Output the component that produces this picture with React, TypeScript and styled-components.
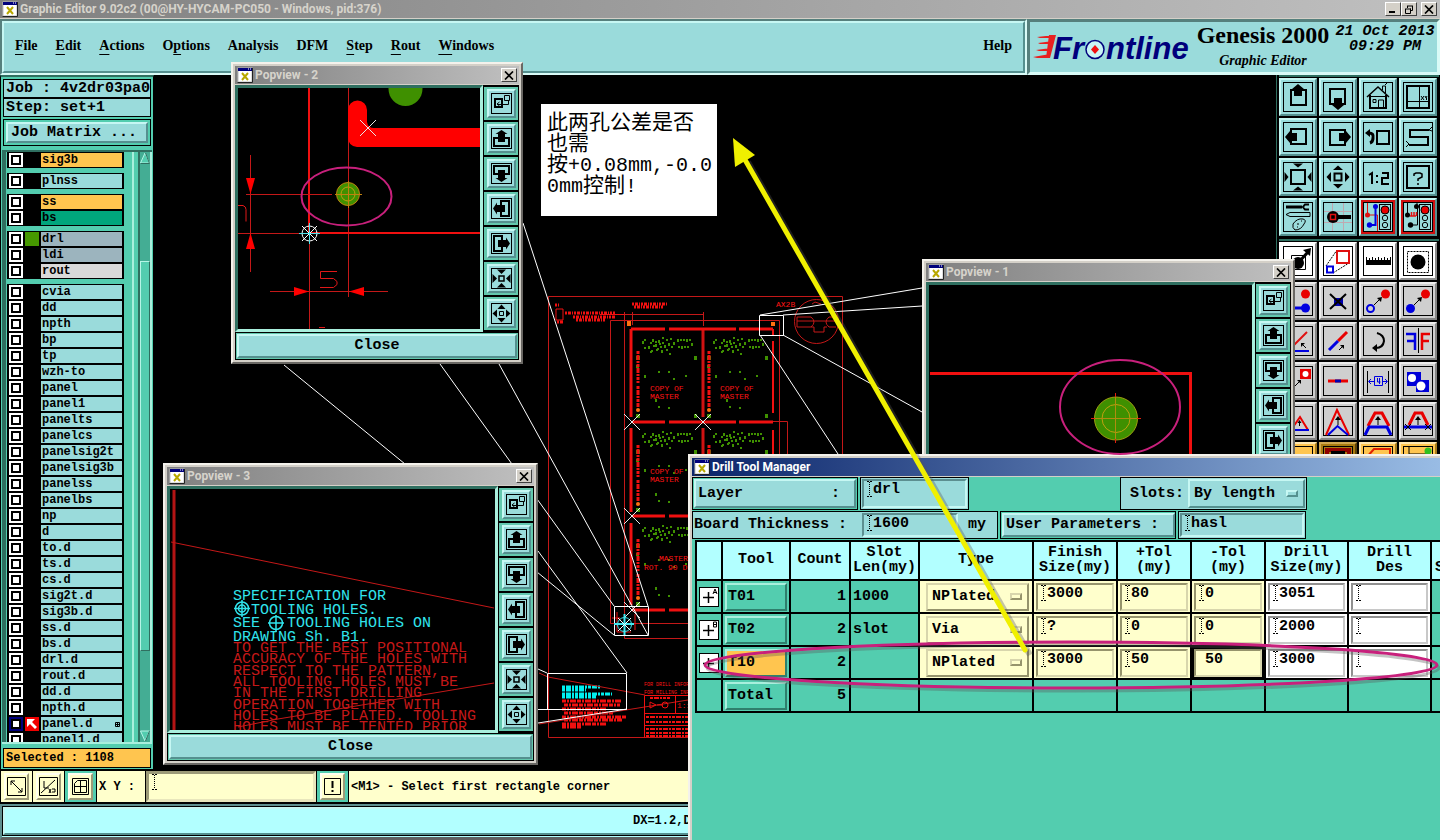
import React from 'react';
import styled, { createGlobalStyle, css } from 'styled-components';

const teal = '#9adbdb';
const green = '#53cdaf';
const cyan = '#b2ffff';
const cream = '#ffffcc';
const orange = '#ffc54f';
const mono = '"Liberation Mono", "Courier New", monospace';
const serif = '"Liberation Serif", "Times New Roman", serif';
const sans = '"Roboto", "Liberation Sans", sans-serif';

const Global = createGlobalStyle`
  * { box-sizing: border-box; }
  body { margin: 0; background: #000; overflow: hidden; }
  button, input, select { font: inherit; color: inherit; margin: 0; padding: 0; border: 0; border-radius: 0; background: none; outline: none; }
`;

const raised = css`
  border: 2px solid;
  border-color: #c6f7f3 #55908f #55908f #c6f7f3;
`;
const sunken = css`
  border: 2px solid;
  border-color: #5c8f90 #c6f7f3 #c6f7f3 #5c8f90;
`;

/* ---------- page shell ---------- */

const Screen = styled.div`
  position: relative;
  display: flex;
  flex-direction: column;
  height: 100vh;
  min-height: 840px;
  overflow: hidden;
  background: #000;
  color: #000;
  font: bold 15px/18px ${mono};
`;

const MainTitle = styled.header`
  display: flex;
  align-items: center;
  height: 19px;
  padding: 0 3px 0 2px;
  gap: 2px;
  border-bottom: 1px solid #d4d0c8;
  background: linear-gradient(90deg, #808080, #c0c0c0);
  color: #d6d3cb;
  font: bold 12px/16px ${sans};
`;
const TitleText = styled.span`
  flex: 1;
  white-space: nowrap;
`;
const CaptionButton = styled.button<{ $gap?: boolean }>`
  display: flex;
  align-items: center;
  justify-content: center;
  width: 16px;
  height: 14px;
  margin-left: ${(p) => (p.$gap ? 2 : -2)}px;
  background: #d4d0c8;
  color: #000;
  border: 1px solid;
  border-color: #fff #404040 #404040 #fff;
`;

const HeaderRow = styled.div`
  display: flex;
  height: 56px;
`;
const MenuFrame = styled.nav`
  flex: 1;
  display: flex;
  border: 2px solid;
  border-color: #56807d #d9fbf7 #d9fbf7 #56807d;
`;
const MenuPanel = styled.div`
  flex: 1;
  display: flex;
  align-items: center;
  gap: 18px;
  padding: 0 11px 2px 11px;
  background: ${teal};
  font: bold 14px/20px ${serif};
  ${raised}
`;
const MenuItem = styled.button`
  white-space: nowrap;
  u { text-underline-offset: 4px; }
  &:last-child { margin-left: auto; }
`;
const Brand = styled.div`
  display: flex;
  width: 413px;
  padding-left: 4px;
  background: ${teal};
  border: 3px solid;
  border-color: #56807d #d9fbf7 #d9fbf7 #56807d;
`;
const BrandName = styled.div`
  width: 140px;
  text-align: center;
  white-space: nowrap;
`;
const Product = styled.div`
  font: bold 24px/26px ${serif};
`;
const Edition = styled.div`
  font: italic bold 14px/26px ${serif};
`;
const Clock = styled.div`
  flex: 1;
  padding-top: 2px;
  text-align: center;
  white-space: nowrap;
  font: italic bold 15px/15px ${mono};
`;

const Body = styled.div`
  display: flex;
  flex: 1;
  min-height: 0;
`;
const Viewport = styled.main`
  flex: 1;
  min-width: 0;
  overflow: hidden;
  svg { display: block; width: 100%; height: 100%; }
`;

/* ---------- left panel ---------- */

const Side = styled.aside`
  display: flex;
  flex-direction: column;
  width: 154px;
  padding: 2px 1px 1px 1px;
  background: ${green};
  border: 1px solid #000;
  border-top: 2px solid #2f6f60;
`;
const InfoBox = styled.div`
  margin: 0 1px;
  border: 1px solid #000;
  background: #000;
  display: grid;
  gap: 2px;
`;
const InfoLine = styled.div`
  padding-left: 2px;
  background: ${teal};
  line-height: 17px;
  white-space: nowrap;
`;
const MatrixBox = styled.div`
  display: flex;
  margin: 2px 1px 4px;
  padding: 2px;
  border: 1px solid #000;
`;
const MatrixButton = styled.button`
  flex: 1;
  height: 21px;
  line-height: 17px;
  padding-left: 3px;
  text-align: left;
  background: ${teal};
  ${raised}
`;
const ListArea = styled.div`
  display: flex;
  flex: 1;
  min-height: 0;
  border-top: 2px solid #2f6f60;
  border-bottom: 2px solid #a9efdd;
`;
const LayerScroll = styled.div`
  flex: 1;
  display: flex;
  flex-direction: column;
  gap: 5px;
  overflow: hidden;
  padding-right: 8px;
  border-left: 4px solid #2f6f60;
  border-right: 2px solid #a9efdd;
`;
const LayerGroup = styled.div`
  flex: none;
  display: grid;
  gap: 2px;
  margin-left: 1px;
  padding: 1px 2px 1px 2px;
  background: #000;
`;
const LayerLine = styled.label`
  display: grid;
  grid-template: 14px / 14px 14px 1fr;
  gap: 2px;
  height: 14px;
  font: bold 12px/14px ${mono};
  svg { display: block; }
`;
const LayerCheck = styled.input<{ $active?: boolean }>`
  appearance: none;
  width: 14px;
  height: 14px;
  border: 2px solid ${(p) => (p.$active ? '#00007c' : '#fff')};
  background: #fff;
  box-shadow: inset 0 0 0 2px #000;
`;
const LayerColour = styled.span<{ $fill: string }>`
  display: block;
  background: ${(p) => p.$fill};
`;
const LayerName = styled.span<{ $fill: string }>`
  display: flex;
  align-items: center;
  justify-content: space-between;
  padding: 0 2px 0 1px;
  background: ${(p) => p.$fill};
  overflow: hidden;
`;
const ScrollTrack = styled.div`
  display: flex;
  flex-direction: column;
  width: 14px;
  margin-left: 4px;
  background: #44ad94;
  border-left: 2px solid #2f6f60;
  border-right: 2px solid #a9efdd;
`;
const Thumb = styled.div`
  flex: 391 1 0;
  background: ${green};
  border: 1px solid;
  border-color: #b5f5e6 #2f6f60 #2f6f60 #b5f5e6;
`;
const TrackGap = styled.div<{ $share: number }>`
  flex: ${(p) => p.$share} 1 0;
`;
const Selected = styled.div`
  margin: 4px 1px 0;
  padding-left: 2px;
  border: 1px solid #000;
  background: ${orange};
  font: bold 12px/18px ${mono};
`;

/* ---------- tool palette ---------- */

const Palette = styled.aside`
  width: 164px;
  padding: 0 1px 0 2px;
  border-left: 1px solid #2f6f60;
  background: #000;
`;
const TileGrid = styled.div`
  display: grid;
  grid-template-columns: repeat(4, 38px);
  gap: 2px;
  padding: 1px 0 3px;
  border-top: 2px solid #2f6f60;
`;
type Tone = 'teal' | 'white' | 'grey' | 'alarm' | 'amber' | 'umber';
const toneFill: Record<Tone, string> = {
  teal, white: '#fff', grey: '#cfcfcf', alarm: teal, amber: orange, umber: '#a87a10',
};
const toneEdge: Record<Tone, string> = {
  teal: '#c6f7f3 #55908f #55908f #c6f7f3',
  white: '#fff #8c8c8c #8c8c8c #fff',
  grey: '#ececec #858585 #858585 #ececec',
  alarm: '#c6f7f3 #55908f #55908f #c6f7f3',
  amber: '#ffe7b0 #a67c20 #a67c20 #ffe7b0',
  umber: '#d0a850 #5c420a #5c420a #d0a850',
};
const Tile = styled.button<{ $tone: Tone }>`
  display: grid;
  place-items: center;
  width: 38px;
  height: 38px;
  background: ${(p) => toneFill[p.$tone]};
  border: 2px solid;
  border-color: ${(p) => toneEdge[p.$tone]};
  box-shadow: ${(p) => (p.$tone === 'alarm' ? 'inset 0 0 0 2px #d01010' : 'none')};
  svg { display: block; }
`;

/* ---------- bottom bars ---------- */

const CommandBar = styled.div`
  display: flex;
  gap: 1px;
  height: 34px;
  padding: 1px 0 0 1px;
  background: #000;
  font: bold 12px/32px ${mono};
`;
const CommandCell = styled.div<{ $green?: boolean }>`
  display: grid;
  place-items: center;
  width: 31px;
  height: 31px;
  background: ${(p) => (p.$green ? green : cream)};
`;
const CommandButton = styled.button`
  display: grid;
  place-items: center;
  width: 25px;
  height: 27px;
  background: ${cream};
  border: 2px solid;
  border-color: #fffff0 #9c9a78 #9c9a78 #fffff0;
`;
const XYLabel = styled.label`
  width: 48px;
  height: 31px;
  padding-left: 2px;
  background: ${cream};
`;
const XYField = styled.div`
  display: flex;
  width: 170px;
  height: 31px;
  padding: 0 3px;
  background: ${cream};
  border: 3px solid;
  border-color: #9c9a78 #e8e6bc #e8e6bc #9c9a78;
  input { flex: 1; min-width: 0; }
`;
const Prompt = styled.div`
  flex: 1;
  height: 31px;
  padding-left: 2px;
  background: ${cream};
`;
const StatusFrame = styled.footer`
  height: 36px;
  padding: 1px 1px 1px 1px;
  background: ${cyan};
  border: 2px solid;
  border-color: #5f8f8f #5f8f8f #606060 #5f8f8f;
  border-bottom-width: 3px;
`;
const StatusBar = styled.div`
  height: 28px;
  padding-left: 628px;
  background: ${cyan};
  outline: 1px solid #000;
  font: bold 12px/24px ${mono};
  ${raised}
`;

/* ---------- floating windows ---------- */

const WindowFrame = styled.section<{ $x: number; $y: number; $w: number; $h: number }>`
  position: absolute;
  left: ${(p) => p.$x}px;
  top: ${(p) => p.$y}px;
  width: ${(p) => p.$w}px;
  height: ${(p) => p.$h}px;
  display: flex;
  flex-direction: column;
  padding: 2px;
  background: #d4d0c8;
  border: 2px solid;
  border-color: #f4f2ec #6a6864 #6a6864 #f4f2ec;
`;
const WindowTitle = styled.div<{ $active?: boolean }>`
  display: flex;
  align-items: center;
  gap: 2px;
  height: 18px;
  flex: none;
  padding: 0 2px;
  margin-bottom: 1px;
  background: ${(p) => (p.$active ? 'linear-gradient(90deg, #0a246a, #a6caf0)' : 'linear-gradient(90deg, #808080, #c0c0c0)')};
  color: ${(p) => (p.$active ? '#fff' : '#d6d3cb')};
  font: bold 12px/16px ${sans};
`;
const PopBody = styled.div`
  display: flex;
  flex: 1;
  min-height: 0;
  background: #000;
`;
const PopCanvas = styled.div`
  flex: 1;
  min-width: 0;
  border: 3px solid;
  border-color: #2f6f60 #a9efdd #a9efdd #2f6f60;
  background: #000;
  svg { display: block; width: 100%; height: 100%; }
`;
const PopTools = styled.div`
  display: flex;
  flex-direction: column;
  gap: 2px;
  width: 36px;
  padding: 2px 1px 0;
`;
const PopCell = styled.div`
  flex: none;
  display: grid;
  place-items: center;
  width: 34px;
  height: 33px;
  background: #63c8ae;
`;
const PopButton = styled.button`
  display: grid;
  place-items: center;
  width: 29px;
  height: 29px;
  background: ${teal};
  ${raised}
  svg { display: block; }
`;
const CloseBar = styled.div`
  display: flex;
  height: 28px;
  padding: 1px;
  background: #63c8ae;
  border: 1px solid #000;
`;
const CloseButton = styled.button`
  flex: 1;
  background: ${teal};
  line-height: 20px;
  ${raised}
`;

/* ---------- drill tool manager ---------- */

const DrillBody = styled.div`
  flex: 1;
  background: ${green};
`;
const FormRow = styled.div<{ $h: number }>`
  display: flex;
  gap: 2px;
  height: ${(p) => p.$h}px;
  margin-bottom: 1px;
`;
const FormCell = styled.div<{ $w: number; $fill?: string; $pull?: boolean }>`
  display: flex;
  align-items: center;
  width: ${(p) => p.$w}px;
  margin-left: ${(p) => (p.$pull ? '149px' : '0')};
  padding: ${(p) => (p.$pull ? '1px 1px 1px 9px' : '1px')};
  background: ${(p) => p.$fill || teal};
  border: 1px solid #000;
  white-space: nowrap;
`;
const FormButton = styled.button`
  flex: 1;
  display: flex;
  align-items: center;
  height: 100%;
  padding: 0 14px 0 2px;
  justify-content: space-between;
  background: ${teal};
  ${raised}
`;
const Field = styled.div<{ $tone?: 'cream' | 'white' }>`
  display: flex;
  flex: 1;
  min-width: 0;
  height: 100%;
  padding: 0 2px 0 3px;
  ${sunken}
  ${(p) => p.$tone && css`
    height: 28px;
    margin: 1px 2px;
    background: ${p.$tone === 'cream' ? cream : '#fff'};
    border-color: ${p.$tone === 'cream' ? '#96946c #d8d6ac #d8d6ac #96946c' : '#909090 #c8c8c8 #c8c8c8 #909090'};
  `}
  input { width: 100%; min-width: 0; height: 18px; line-height: 18px; }
`;
const FormLabel = styled.label`
  padding: 0 4px 0 0;
`;
const ThicknessLabel = styled(FormLabel)`
  padding-right: 15px;
`;
const Unit = styled.span`
  padding: 0 10px;
`;
const SelectBox = styled.div<{ $tone?: 'cream' }>`
  display: flex;
  align-items: center;
  flex: 1;
  height: ${(p) => (p.$tone ? '28px' : '100%')};
  margin: ${(p) => (p.$tone ? '1px 3px 1px 6px' : '0')};
  padding: 0 5px 0 4px;
  background: ${(p) => (p.$tone ? cream : teal)};
  ${raised}
  ${(p) => p.$tone && css`border-color: #d8d6ac #96946c #96946c #d8d6ac;`}
  select { appearance: none; flex: 1; min-width: 0; }
`;
const SelectKnob = styled.span<{ $tone?: 'cream' }>`
  width: 12px;
  height: 7px;
  border: 2px solid;
  border-color: ${(p) => (p.$tone ? '#d8d6ac #96946c #96946c #d8d6ac' : '#c6f7f3 #55908f #55908f #c6f7f3')};
`;
const ToolTable = styled.table`
  table-layout: fixed;
  width: 815px;
  margin: 0 0 0 3px;
  border-collapse: collapse;
  th, td { padding: 0; border: 2px solid #000; }
  th { height: 39px; padding-bottom: 2px; background: ${cyan}; font-weight: bold; line-height: 15px; white-space: pre-line; text-align: center; }
  td { height: 33px; background: ${green}; }
`;
const NumberCell = styled.td`
  && { text-align: right; padding-right: 3px; }
`;
const TextCell = styled.td`
  && { padding-left: 2px; }
`;
const FieldCell = styled.td<{ $tone: 'cream' | 'white'; $focus?: boolean }>`
  && {
    background: ${(p) => (p.$tone === 'cream' ? cream : '#fff')};
    box-shadow: ${(p) => (p.$focus ? 'inset 0 0 0 2px #000' : 'none')};
  }
`;
const ToolButton = styled.button<{ $hot?: boolean }>`
  display: block;
  width: 62px;
  height: 28px;
  margin: 0 auto;
  padding-left: 1px;
  text-align: left;
  background: ${(p) => (p.$hot ? orange : green)};
  border: 2px solid;
  border-color: #a9efdd #2f7f6c #2f7f6c #a9efdd;
`;
const MarkCell = styled.td`
  svg { display: block; margin: 0 auto; }
`;

/* ---------- annotations ---------- */

const Note = styled.div`
  position: absolute;
  left: 541px;
  top: 104px;
  width: 176px;
  height: 112px;
  padding: 6px 0 0 6px;
  background: #fff;
  white-space: nowrap;
  font: 20px/21px ${mono};
`;
const NoteLine = styled.div`
  height: 21px;
`;
const Han = styled.span`
  font: 21px/21px "Noto Sans CJK SC", sans-serif;
`;
const Markup = styled.svg`
  position: absolute;
  left: 0;
  top: 0;
  width: 100%;
  height: 100%;
  pointer-events: none;
`;

/* ---------- small drawings ---------- */

const AppIcon = () => (
  <svg width="16" height="16" viewBox="0 0 16 16" aria-hidden="true">
    <rect x="1" y="1" width="14" height="14" fill="#fff" stroke="#bbb" />
    <rect x="1" y="1" width="14" height="3" fill="#00007c" />
    <path d="M11 2h1M13 2h1" stroke="#fff" />
    <path d="M5 6l6 7M11 6l-6 7" stroke="#b8a800" strokeWidth="2" />
    <path d="M15.500 1v14.500h-15" stroke="#222" fill="none" />
  </svg>
);

const CloseGlyph = () => (
  <svg width="10" height="9" viewBox="0 0 10 9" aria-hidden="true">
    <path d="M1 0.500l8 8M9 0.500l-8 8" stroke="#000" strokeWidth="1.700" />
  </svg>
);

const BeamMark = styled.svg`
  flex: none;
`;
const Beam = () => (
  <BeamMark width="6" height="16" viewBox="0 0 6 16" aria-hidden="true">
    <path d="M2.500 1v14" stroke="#000" strokeDasharray="1 1" />
    <path d="M0 0.500h2M3 0.500h2M0 15.500h2M3 15.500h2" stroke="#000" />
  </BeamMark>
);

const arrowUp = 'M15 2l6 5h-2v7h-8v-7h-2z';
const boxArrow = (turn: number) => (
  <g transform={`rotate(${turn} 15 15)`}>
    <rect x="8" y="8" width="15" height="15" fill="none" stroke="#000" strokeWidth="2" />
    <path d={arrowUp} />
  </g>
);
const around = (d: string, c = 15) => [0, 90, 180, 270].map((a) => <path key={a} d={d} transform={`rotate(${a} ${c} ${c})`} />);
const line = (d: string, stroke = '#000', w = 1, dash?: string) => (
  <path d={d} fill="none" stroke={stroke} strokeWidth={w} strokeDasharray={dash} />
);
const light = (
  <>
    <rect x="16.500" y="2.500" width="11" height="25" fill={teal} stroke="#000" />
    <circle cx="22" cy="8" r="4" fill="#e80000" stroke="#000" />
    <circle cx="22" cy="16" r="2.700" fill="none" stroke="#000" />
    <circle cx="22" cy="23" r="2.700" fill="none" stroke="#000" />
  </>
);
const upTick = <>{line('M15 13v6')}<path d="M15 10l3 4h-6z" /></>;

type Tool = { name: string; tone: Tone; art: React.ReactNode };

const viewTools: Tool[] = [
  { name: 'Pan up', tone: 'teal', art: boxArrow(0) },
  { name: 'Pan down', tone: 'teal', art: boxArrow(180) },
  { name: 'Home', tone: 'teal', art: <>
    {line('M4 15L15 5L26 15', '#000', 1.5)}
    {line('M7 13v13h16v-13', '#000', 2)}
    {line('M7 14.500h16M15.500 26v-8h5v8M10 17.500h3v3h-3zM19.500 8v-4h3v7M22 3l2-2')}
  </> },
  { name: 'Coordinates', tone: 'teal', art: <>
    {line('M4 4h22v22h-22z', '#000', 2)}
    {line('M16.500 4v22M4 19.500h22M18 14l3 4M21 14l-3 4M22 14l1 2l1-2M23.500 16v2')}
  </> },
  { name: 'Pan left', tone: 'teal', art: boxArrow(270) },
  { name: 'Pan right', tone: 'teal', art: boxArrow(90) },
  { name: 'Previous view', tone: 'teal', art: <>
    {line('M14 9h12v13h-12z', '#000', 2)}
    {line('M6 11q5 0 4 5q0 4-3 5', '#000', 3)}
    <path d="M2 11l5-4v8z" />
  </> },
  { name: 'Serpentine', tone: 'teal', art: <>
    {line('M26 8H7v7h18v8H6', '#000', 2)}
    {line('M26 8l3-3M26 8l3 1M6 22l-3-3M6 22l-3 3')}
  </> },
  { name: 'Zoom in', tone: 'teal', art: <>
    {line('M8 8h14v14h-14z', '#000', 2)}
    {around('M10 1.500h10l-5 4z')}
  </> },
  { name: 'Zoom out', tone: 'teal', art: <>
    {line('M11.500 11.500h7v7h-7z', '#000', 2)}
    {around('M10 8h10l-5-4.500z')}
  </> },
  { name: 'Scale one to two', tone: 'teal', art: <>
    {line('M6 13l3-2v11M19 11h6v5h-6v6h7', '#000', 2)}
    <path d="M13 13h2v2h-2zM13 19h2v2h-2z" />
  </> },
  { name: 'Query', tone: 'teal', art: <>
    {line('M4 4h22v22h-22z', '#000', 2)}
    {line('M11 14v-2l2-1h4l2 1v3l-4 2v2M15 21v2', '#000', 1.5)}
  </> },
  { name: 'Setup', tone: 'teal', art: <>
    {line('M3 5h16', '#000', 3)}
    {line('M26 2.500h-4l-2 2.500l2 2.500h4', '#000', 2)}
    {line('M3 12.500l4-2h20v4h-20z')}
    {line('M10 22q4-6 10-5q4 1 1 5q-3 6-9 6q-3-2-2-6M14 22h2M18 19h1M14 25h1')}
  </> },
  { name: 'Pick feature', tone: 'teal', art: <>
    {line('M9.500 1v28M20.500 1v28M1 9.500h28M1 20.500h28', '#c0a8b0')}
    <circle cx="10" cy="15" r="6" />
    {line('M15 15h13', '#000', 4)}
    {line('M7.500 12.500h5v5h-5z', '#e01010', 1.5)}
  </> },
  { name: 'Net check', tone: 'alarm', art: <>
    {line('M4.500 1v12h10v16', '#e01010')}
    {line('M12.500 4v19h-6', '#0000e0', 2)}
    <circle cx="4.500" cy="13" r="2.500" fill="#e01010" />
    <circle cx="12.500" cy="4.500" r="2.500" fill="#0000e0" />
    <circle cx="6.500" cy="23" r="2.700" fill="#0000e0" />
    {light}
  </> },
  { name: 'Gap check', tone: 'alarm', art: <>
    {line('M4.500 1v12M14.500 4v19h-6M14 1v3')}
    {line('M7 14h6M8.500 10v4M11 10v4M13.500 10v4', '#e01010', 1.5)}
    <circle cx="4.500" cy="13" r="2.500" />
    <circle cx="13.500" cy="4.500" r="2.500" />
    <circle cx="7.500" cy="23" r="2.700" />
    {light}
  </> },
];

const editTools: Tool[] = [
  { name: 'Select point', tone: 'white', art: <>
    {line('M8.500 9.500h14v14h-14z')}<circle cx="15" cy="17" r="6" />
    {line('M15 17L25 6', '#000', 3)}<path d="M28 2l-1 8l-7-6z" />
  </> },
  { name: 'Transform', tone: 'white', art: <>
    {line('M3 20L14 4M10 27L26 17', '#000', 1, '2 1')}
    {line('M14 5h12v12h-12z', '#e01010', 2)}{line('M4 20.500h6v6h-6z', '#0000e0', 2)}
  </> },
  { name: 'Measure', tone: 'white', art: <>
    <path d="M3 14h25v5h-25z" />{line('M3.500 11v4M6.500 12v3M9.500 11v4M12.500 12v3M15.500 11v4M18.500 12v3M21.500 11v4M24.500 12v3M27.500 11v4')}
  </> },
  { name: 'Select area', tone: 'white', art: <>
    {line('M4.500 5.500h21v21h-21z', '#000', 1, '2 1')}<circle cx="15" cy="16" r="7.500" />
  </> },
  { name: 'Join', tone: 'grey', art: <>
    {line('M4 22h18', '#0000e0', 3)}<circle cx="22.500" cy="8" r="4.500" fill="#e80000" /><circle cx="22.500" cy="22" r="4.500" fill="#0000e0" />
  </> },
  { name: 'Delete', tone: 'grey', art: <>
    <path d="M11 12h9v8h-9z" fill="#0000b0" />{line('M7 8l16 15M23 8l-16 15', '#000', 2)}
  </> },
  { name: 'Copy', tone: 'grey', art: <>
    <circle cx="7.500" cy="22.500" r="3.500" fill="none" stroke="#0000e0" strokeWidth="2" />
    <circle cx="22.500" cy="8" r="4.500" fill="#e80000" />{line('M11 19l6-6')}<path d="M19 11l-1 5l-4-4z" />
  </> },
  { name: 'Move', tone: 'grey', art: <>
    <circle cx="7.500" cy="22.500" r="4.500" fill="#0000e0" />
    <circle cx="22.500" cy="8" r="4.500" fill="#e80000" />{line('M11 19l6-6')}<path d="M19 11l-1 5l-4-4z" />
  </> },
  { name: 'Angle', tone: 'grey', art: <>
    {line('M24 6L10 20', '#e01010', 2)}{line('M8 25h18', '#0000e0', 2)}{line('M23 22l-4-4')}<path d="M18 17h4l-4 4z" />
  </> },
  { name: 'Extend', tone: 'grey', art: <>
    {line('M24 6L15 15', '#e80000', 3)}{line('M15 15L6 24', '#0000e0', 3)}{line('M16 24l3-3')}<path d="M21 19v4l-4-4z" />
  </> },
  { name: 'Rotate', tone: 'grey', art: <>
    {line('M14 7q7 2 7 8q-1 7-8 7', '#000', 2)}<path d="M9 22l5-4v8z" />
  </> },
  { name: 'Mirror', tone: 'grey', art: <>
    {line('M15.500 2v25')}{line('M3 8h9v16M4 15h8', '#0000e0', 2.5)}{line('M27 8h-8v16M26 15h-7', '#e80000', 2.5)}
  </> },
  { name: 'Scale', tone: 'grey', art: <>
    <path d="M17 3h11v10h-11z" fill="#e80000" /><circle cx="22.500" cy="8" r="3" fill="#fff" />
    {line('M12 20l4-4')}<path d="M18 14v4l-4-4z" /><path d="M4 16h8v11h-8z" fill="#0000d8" />
  </> },
  { name: 'Break', tone: 'grey', art: <>{line('M5 15h20', '#e80000', 3)}{line('M12 15h6', '#0000b0', 3)}</> },
  { name: 'Spacing', tone: 'grey', art: <>
    {line('M4.500 5v22M25.500 5v22')}
    {line('M11.500 10.500h8v9h-8zM6 15.500h5M8 13l-2.500 2.500L8 18M20 15.500h4M22 13l2.500 2.500L22 18M14.500 12v4h3M16.500 12v6', '#0000e0')}
  </> },
  { name: 'Merge surfaces', tone: 'grey', art: <>
    <path d="M4 6h14v8h8v12h-13v-6h-9z" fill="#0000d8" /><circle cx="9" cy="12" r="4" fill="#fff" /><circle cx="18" cy="20" r="4.500" fill="#fff" />
  </> },
  { name: 'Peak', tone: 'grey', art: <>{line('M8 24l9-13l8 13', '#e80000', 2)}{line('M6 24h20', '#0000e0', 2)}{line('M16.500 15v5')}<path d="M16.500 14l2 3h-4z" /></> },
  { name: 'Tall peak', tone: 'grey', art: <>{line('M3 29L14 4L26 29', '#e80000', 2)}{line('M5 29L14.500 20L25 29', '#0000e0', 2)}{upTick}</> },
  { name: 'Bridge', tone: 'grey', art: <>{line('M5 20L12 7h7L26 20', '#e80000', 3)}{line('M2 29L6 21h18L28 29', '#0000e0', 3)}{upTick}</> },
  { name: 'Trim bridge', tone: 'grey', art: <>
    {line('M6 19L12 7h7L25 19', '#e80000', 3)}{line('M1 21h28', '#0000e0', 3)}{upTick}
    {line('M2 18l6 6M8 18l-6 6M22 18l6 6M28 18l-6 6')}
  </> },
  { name: 'Layer fill', tone: 'amber', art: null },
  { name: 'Route', tone: 'umber', art: <>{line('M4 4h22v10h-22z', '#900000', 4)}<path d="M8 5h14v20h-14z" /></> },
  { name: 'Outline', tone: 'amber', art: line('M27 3h-16l-8 9v14h24z', '#e02000', 2) },
  { name: 'Resize', tone: 'amber', art: <>{line('M6 1v28M6 8h20')}<circle cx="25" cy="5" r="3.500" fill="#30c020" /></> },
];

const ToolTiles = ({ tools }: { tools: Tool[] }) => (
  <TileGrid>
    {tools.map((t) => (
      <Tile key={t.name} $tone={t.tone} aria-label={t.name}>
        <svg width="30" height="30" viewBox="0 0 30 30" aria-hidden="true">
          <rect x="0.500" y="0.500" width="29" height="29" fill="none" stroke="#000" />
          {t.art}
        </svg>
      </Tile>
    ))}
  </TileGrid>
);

const popBox = (turn: number) => (
  <g transform={`rotate(${turn} 10.5 10.5)`}>
    {line('M7 10H3v8h15v-8h-4', '#000', 2)}
    <path d="M10.500 2l6 4h-2.500v8h-7v-8h-2.500z" />
  </g>
);
const popTools: [string, React.ReactNode][] = [
  ['Link view', <>
    {line('M4 6h7v8h-7z', '#000', 2)}
    {line('M13.500 2.500h5v5h-5zM17.500 8v3.500h-11M8.500 9l-2.500 2l2.500 2')}
  </>],
  ['Pan view up', popBox(0)],
  ['Pan view down', popBox(180)],
  ['Pan view left', popBox(270)],
  ['Pan view right', popBox(90)],
  ['Zoom view in', <>{line('M8 8h5v5h-5z', '#000', 1.5)}{around('M6 1.500h9l-4.500 4.500z', 10.5)}</>],
  ['Zoom view out', <>{line('M8.500 8.500h4v4h-4z')}{around('M6.500 6h8l-4-4.500z', 10.5)}</>],
];

const Popview = ({ title, x, y, w, children }: { title: string; x: number; y: number; w: number; children: React.ReactNode }) => (
  <WindowFrame $x={x} $y={y} $w={w} $h={302}>
    <WindowTitle>
      <AppIcon />
      <TitleText>{title}</TitleText>
      <CaptionButton aria-label="Close window"><CloseGlyph /></CaptionButton>
    </WindowTitle>
    <PopBody>
      <PopCanvas>{children}</PopCanvas>
      <PopTools>
        {popTools.map(([name, art]) => (
          <PopCell key={name}>
            <PopButton aria-label={name}>
              <svg width="21" height="21" viewBox="0 0 21 21" aria-hidden="true">
                <rect x="0.500" y="0.500" width="20" height="20" fill="none" stroke="#000" />
                {art}
              </svg>
            </PopButton>
          </PopCell>
        ))}
      </PopTools>
    </PopBody>
    <CloseBar><CloseButton>Close</CloseButton></CloseBar>
  </WindowFrame>
);

/* ---------- board drawing ---------- */

const red = '#f01010';
const dimRed = '#c41818';
const leaf = '#3f9000';

const drillCluster: number[][] = [
  [12, 8], [14, 6], [14, 14], [18, 13], [20, 9], [21, 17], [22, 6], [23, 12], [25, 8], [25, 11], [26, 16], [27, 15], [28, 7], [29, 10],
  [30, 13], [31, 17], [32, 4], [32, 9], [34, 12], [36, 6], [36, 16], [38, 10], [40, 5], [41, 13], [43, 9], [39, 20], [20, 18],
  [47, 6], [50, 6], [53, 6], [56, 6], [59, 6], [48, 13], [51, 13], [54, 13], [57, 13], [61, 10],
];
const drillField: number[][] = [
  [28, 38], [38, 38], [14, 42], [43, 45], [55, 42], [25, 66], [28, 73], [38, 74],
];

const BoardCell = ({ x, y }: { x: number; y: number }) => (
  <g transform={`translate(${x} ${y})`}>
    {[...drillCluster, ...drillField].map(([a, b], i) => <rect key={i} x={a - 1} y={b} width="2" height={i % 3 ? 2 : 3} fill={leaf} />)}
    <path d="M5 23h4v4h-4zM63 23h3v4h-3zM5 81h4v4h-4zM63 81h3v4h-3zM5 32h3v3h-3z" fill={leaf} />
    {line('M7 18v32M7 53v21', red, 3, '3 1 5 1 2 1')}
    <circle cx="7" cy="77" r="2" fill="#ff7010" />
  </g>
);

const cross = (x: number, y: number, r = 8) => line(`M${x - r} ${y - r}l${2 * r} ${2 * r}M${x + r} ${y - r}l${-2 * r} ${2 * r}`, '#e8e8e8');

const CadText = styled.text<{ $size: number }>`
  font: ${(p) => p.$size}px ${mono};
  white-space: pre;
`;

const Board = () => (
  <svg aria-label="Board layout">
    <g transform="translate(-154 -75)">
      {line('M548.500 296.500h294v441h-294z', dimRed)}
      {line('M610.500 320.500h169v303h-169z', dimRed)}
      {line('M624.500 638.500h150M624.500 638.500V312M632.500 325V312M624 314.500h79M703.500 312v14M773 421.500h14.500V520', dimRed)}
      {line('M631 329v88M631 428v84M631 523v82', red, 3)}
      {line('M703 329v88M703 428v84', '#d01212', 3)}
      {line('M773 329v6M773 341v72M773 430v84', red, 2)}
      {line('M631 329h34M669 329h67M739 329h34M632 422h33M669 422h67M739 422h34M632 516h33M669 516h67M632 610h33M669 610h60', red, 3)}
      <BoardCell x={631} y={333} />
      <BoardCell x={702} y={333} />
      <BoardCell x={631} y={427} />
      <BoardCell x={702} y={427} />
      <BoardCell x={631} y={521} />
      <g fill="#ff1414">
        <CadText $size={8} x="650" y="391">COPY OF</CadText>
        <CadText $size={8} x="650" y="399">MASTER</CadText>
        <CadText $size={8} x="720" y="391">COPY OF</CadText>
        <CadText $size={8} x="720" y="399">MASTER</CadText>
        <CadText $size={8} x="650" y="474">COPY OF</CadText>
        <CadText $size={8} x="650" y="482">MASTER</CadText>
        <CadText $size={8} x="659" y="561">MASTER</CadText>
        <CadText $size={8} x="644" y="570">ROT. 90 DEG</CadText>
        <CadText $size={8} x="776" y="307">AX2B</CadText>
        <CadText $size={5} x="644" y="686">FOR DRILL INFOR</CadText>
        <CadText $size={5} x="644" y="694">FOR MILLING INF</CadText>
      </g>
      {line('M632 304h36M634 307h30M565 313h50M573 317h42M576 320h30M555 305h4M557 322h6', red, 3, '2 1 3 1 1 1')}
      {line('M556 309h7v11h-7zM600 314.500h24', red)}
      <rect x="627" y="321" width="4" height="5" fill="#ff7010" />
      <rect x="771" y="322" width="4" height="4" fill="#ff7010" />
      <circle cx="816.500" cy="321.500" r="22" fill="none" stroke={dimRed} />
      {line('M797 317h14q6 5 0 10h-14zM836 317h-7q-6 5 0 10h7M811 327h3v5h10v-5h3M797 321h40M812 304l3-2l6 2', dimRed)}
      {/* notes and title block */}
      {line('M562 687h38M562 690h24M562 694h50M562 697h34', '#00f0f0', 3, '3 1 5 1 2 1')}
      {line('M562 701h60M564 705h56M562 709h44M564 713h50M562 717h64M564 720h58M562 724h44M562 727h20', red, 3, '4 1 2 1 6 1')}
      {line('M548 677L645 695M539 673l9 4M539 724L688 700', dimRed)}
      {line('M644.500 695.500h60v42M644.500 695.500v42M644.500 713.500h44M644.500 725.500h44M675.500 695v18', red)}
      {line('M646 717h42M646 722h42M646 729h42M646 733h42M646 736h42M650 698h20', red, 2, '3 1 5 1 2 1')}
      <circle cx="665" cy="705" r="3" fill="none" stroke={red} />
      {line('M650 702l6 3l-6 3zM657 705h6', red)}
      <CadText $size={8} x="677" y="708" fill={red}>1:1</CadText>
      {line('M617 612v20h14M612 618h8M635 614v16', red)}
      {cross(632, 422)}{cross(703, 422)}{cross(632, 516)}{cross(632, 610)}
      {/* magnified areas and the leader lines to their views */}
      {line('M759.500 315.500h24v20h-24zM614.500 606.500h34v29h-34zM547.500 673.500h79v36h-79z', '#fff')}
      {line('M760 315L922 288M783 315L922 306M783 335L922 412M760 335L838 454', '#fff')}
      {line('M523 223L648 606M499 364L648 635M440 364L614 606M284 365L614 635', '#fff')}
      {line('M538 551L627 673M538 669l9 4M538 709.500h10M538 723L627 709', '#fff')}
      {line('M614 624h20M624.500 614v21', '#40e8f0', 2)}
      <circle cx="624.500" cy="624.500" r="7" fill="none" stroke="#40e8f0" />
      {line('M618 618l13 13M631 618l-13 13', '#fff')}
    </g>
  </svg>
);

const PopTwoArt = () => (
  <svg viewBox="238 88 242 241" preserveAspectRatio="xMinYMin" aria-label="Magnified board corner">
    {line('M309 88v145', red, 2)}
    {line('M309.500 233v96M348.500 88v209M238 233.500h72M246 194.500h86M270 291.500h118M250.500 155v117', dimRed)}
    {line('M309 233h171', red, 2)}
    <path d="M348 110a9 9 0 0 1 19 0v12q1 6 7 6h106v19h-123q-9-1-9-10z" fill="#ff0000" />
    <circle cx="405.500" cy="89" r="17" fill={leaf} />
    <circle cx="348" cy="194" r="11.500" fill={leaf} stroke="#c08010" />
    <circle cx="348" cy="194" r="7" fill="none" stroke="#c0a010" />
    {line('M335 194.500h27M348.500 181v27', '#c08010')}
    <path d="M246 178h9l-4.500 16zM246 249h9l-4.500-16zM294 287v9l15-4.500zM364 287v9l-15-4.500z" fill="#ff0000" />
    {line('M337 271.500h-16.500v7h13l3.500 3v3l-3.500 3h-13.500M238 205.500h5q3 1 3 4v12M319 327.500h6', '#e01818')}
    {cross(368, 128)}
    <circle cx="309.500" cy="233.500" r="7.500" fill="none" stroke="#fff" />
    {line('M302 226l15 15M317 226l-15 15', '#fff')}
    {line('M299 233.500h21M309.500 223v21', '#50e0e8')}
  </svg>
);

const PopOneArt = () => (
  <svg viewBox="929 285 322 241" preserveAspectRatio="xMinYMin" aria-label="Magnified hole">
    {line('M930 373.500h260.500V526', red, 3)}
    <circle cx="1116" cy="418.500" r="21.500" fill={leaf} stroke="#a0a010" />
    <circle cx="1116" cy="418.500" r="14" fill="none" stroke="#c0a010" />
    {line('M1091 418.500h50M1115.500 393v50', '#e02010')}
    {line('M1095 418.500h42M1115.500 397v42', '#b08c10')}
  </svg>
);

const specCyan = ['SPECIFICATION FOR', '  TOOLING HOLES.', 'SEE   TOOLING HOLES ON', 'DRAWING Sh. B1.'];
const specRed = [
  'TO GET THE BEST POSITIONAL', 'ACCURACY OF THE HOLES WITH', 'RESPECT TO THE PATTERN,', 'ALL TOOLING HOLES MUST BE',
  'IN THE FIRST DRILLING', 'OPERATION TOGETHER WITH', 'HOLES TO BE PLATED. TOOLING', 'HOLES MUST BE TENTED PRIOR',
];

const PopThreeArt = () => (
  <svg viewBox="170 489 325 241" preserveAspectRatio="xMinYMin" aria-label="Magnified notes">
    {line('M174 490v240', '#b41414', 3)}
    {line('M171 542L494 608', dimRed)}
    {line('M238 727l40-8L494 683', dimRed)}
    {specCyan.map((t, i) => <CadText key={t} $size={15} x="233" y={600 + Math.round(i * 13.6)} fill="#30e4ec">{t}</CadText>)}
    {specRed.map((t, i) => <CadText key={t} $size={15} x="233" y={652 + Math.round(i * 11.3)} fill={dimRed}>{t}</CadText>)}
    <g fill="none" stroke="#30e4ec" strokeWidth="1.500">
      <circle cx="242" cy="608.500" r="6.500" /><circle cx="242" cy="608.500" r="3.500" />
      <circle cx="276" cy="623" r="6.500" />
      <path d="M234 608.500h16M242 600v17M268 623h16M276 615v17" />
    </g>
  </svg>
);

/* ---------- data ---------- */

type Layer = { name: string; fill?: string; colour?: string; active?: boolean };
const layerGroups: Layer[][] = [
  [{ name: 'sig3b', fill: orange }],
  [{ name: 'plnss' }],
  [{ name: 'ss', fill: orange }, { name: 'bs', fill: '#00a67c' }],
  [{ name: 'drl', fill: '#9cb4be', colour: '#469800' }, { name: 'ldi', fill: '#9cb4be' }, { name: 'rout', fill: '#d9d9d9' }],
  [
    ...['cvia', 'dd', 'npth', 'bp', 'tp', 'wzh-to', 'panel', 'panel1', 'panelts', 'panelcs', 'panelsig2t', 'panelsig3b', 'panelss',
      'panelbs', 'np', 'd', 'to.d', 'ts.d', 'cs.d', 'sig2t.d', 'sig3b.d', 'ss.d', 'bs.d', 'drl.d', 'rout.d', 'dd.d', 'npth.d'].map((name) => ({ name })),
    { name: 'panel.d', active: true },
    { name: 'panel1.d' },
  ],
];

const menu: [string, string, string][] = [
  ['', 'F', 'ile'], ['', 'E', 'dit'], ['', 'A', 'ctions'], ['O', 'p', 'tions'], ['Analysis', '', ''], ['DFM', '', ''],
  ['', 'S', 'tep'], ['', 'R', 'out'], ['', 'W', 'indows'], ['Help', '', ''],
];

const columns: [string, number][] = [
  ['', 26], ['Tool', 68], ['Count', 60], ['Slot\nLen(my)', 69], ['Type', 114], ['Finish\nSize(my)', 84], ['+Tol\n(my)', 74],
  ['-Tol\n(my)', 74], ['Drill\nSize(my)', 83], ['Drill\nDes', 83], ['Slot\nSize(my)', 80],
];

type Drill = { tool: string; mark: string; count: number; slot: string; type: string; finish: string; plus: string; minus: string; size: string; hot?: boolean };
const drills: Drill[] = [
  { tool: 'T01', mark: 'A', count: 1, slot: '1000', type: 'NPlated', finish: '3000', plus: '80', minus: '0', size: '3051' },
  { tool: 'T02', mark: 'B', count: 2, slot: 'slot', type: 'Via', finish: '?', plus: '0', minus: '0', size: '2000' },
  { tool: 'T10', mark: '', count: 2, slot: '', type: 'NPlated', finish: '3000', plus: '50', minus: '50', size: '3000', hot: true },
];

const TextField = ({ label, value, tone, bare }: { label: string; value: string; tone?: 'cream' | 'white'; bare?: boolean }) => (
  <Field $tone={tone}>
    {bare ? <BeamMark width="6" height="16" aria-hidden="true" /> : <Beam />}
    <input aria-label={label} defaultValue={value} />
  </Field>
);

const DrillManager = () => (
  <WindowFrame $x={688} $y={454} $w={825} $h={420}>
    <WindowTitle $active>
      <AppIcon />
      <TitleText>Drill Tool Manager</TitleText>
    </WindowTitle>
    <DrillBody>
      <FormRow $h={33}>
        <FormCell $w={166} $fill={green}><FormButton><span>Layer</span><span>:</span></FormButton></FormCell>
        <FormCell $w={109}><TextField label="Layer" value="drl" /></FormCell>
        <FormCell $w={187} $pull>
          <FormLabel htmlFor="slots">Slots:</FormLabel>
          <SelectBox>
            <select id="slots"><option>By length</option></select>
            <SelectKnob />
          </SelectBox>
        </FormCell>
      </FormRow>
      <FormRow $h={28}>
        <FormCell $w={306}>
          <ThicknessLabel htmlFor="thickness">Board Thickness :</ThicknessLabel>
          <Field><Beam /><input id="thickness" defaultValue="1600" /></Field>
          <Unit>my</Unit>
        </FormCell>
        <FormCell $w={176} $fill={green}><FormButton>User Parameters :</FormButton></FormCell>
        <FormCell $w={128}><TextField label="User parameters" value="hasl" /></FormCell>
      </FormRow>
      <ToolTable>
        <colgroup>{columns.map(([name, w]) => <col key={name} style={{ width: w }} />)}</colgroup>
        <thead>
          <tr>{columns.map(([name]) => <th key={name}>{name}</th>)}</tr>
        </thead>
        <tbody>
          {drills.map((d) => (
            <tr key={d.tool}>
              <MarkCell>
                <svg width="20" height="20" viewBox="0 0 20 20" aria-hidden="true">
                  <rect x="0.500" y="0.500" width="19" height="19" fill="#fff" stroke="#000" />
                  {line('M4 10.500h11M9.500 5v11', '#000', 1.5)}
                  {d.mark === 'A' && line('M14 7l2-5l2 5M15 5.500h3')}
                  {d.mark === 'B' && line('M14.500 7v-5h3v5zM14.500 4.500h3')}
                </svg>
              </MarkCell>
              <td><ToolButton $hot={d.hot}>{d.tool}</ToolButton></td>
              <NumberCell>{d.count}</NumberCell>
              <TextCell>{d.slot}</TextCell>
              <FieldCell $tone="cream">
                <SelectBox $tone="cream">
                  <select aria-label={`${d.tool} type`}><option>{d.type}</option></select>
                  <SelectKnob $tone="cream" />
                </SelectBox>
              </FieldCell>
              <FieldCell $tone="cream"><TextField tone="cream" label={`${d.tool} finish size`} value={d.finish} /></FieldCell>
              <FieldCell $tone="cream"><TextField tone="cream" label={`${d.tool} plus tolerance`} value={d.plus} /></FieldCell>
              <FieldCell $tone="cream" $focus={d.hot}><TextField tone="cream" label={`${d.tool} minus tolerance`} value={d.minus} bare={d.hot} /></FieldCell>
              <FieldCell $tone="white"><TextField tone="white" label={`${d.tool} drill size`} value={d.size} /></FieldCell>
              <FieldCell $tone="white"><TextField tone="white" label={`${d.tool} designator`} value="" /></FieldCell>
              <td />
            </tr>
          ))}
          <tr>
            <td />
            <td><ToolButton>Total</ToolButton></td>
            <NumberCell>5</NumberCell>
            <td /><td /><td /><td /><td /><td /><td /><td />
          </tr>
        </tbody>
      </ToolTable>
    </DrillBody>
  </WindowFrame>
);

const LayerPanel = () => (
  <Side>
    <InfoBox>
      <InfoLine>Job : 4v2dr03pa0</InfoLine>
      <InfoLine>Step: set+1</InfoLine>
    </InfoBox>
    <MatrixBox><MatrixButton>Job Matrix ...</MatrixButton></MatrixBox>
    <ListArea>
      <LayerScroll>
        {layerGroups.map((group) => (
          <LayerGroup key={group[0].name}>
            {group.map((l) => (
              <LayerLine key={l.name}>
                <LayerCheck type="checkbox" $active={l.active} />
                <LayerColour $fill={l.colour || '#000'}>
                  {l.active && (
                    <svg width="14" height="14" viewBox="0 0 14 14" aria-hidden="true">
                      <rect width="14" height="14" fill="#f00000" />
                      <path d="M2 2h8l-3 3l5 5l-2 2l-5-5l-3 3z" fill="#fff" />
                    </svg>
                  )}
                </LayerColour>
                <LayerName $fill={l.fill || teal}>
                  {l.name}
                  {l.active && (
                    <svg width="5" height="5" viewBox="0 0 5 5" aria-hidden="true">{line('M0.500 0.500h4v4h-4zM2.500 0v5M0 2.500h5')}</svg>
                  )}
                </LayerName>
              </LayerLine>
            ))}
          </LayerGroup>
        ))}
      </LayerScroll>
      <ScrollTrack>
        <svg width="10" height="12" viewBox="0 0 10 12" aria-hidden="true">
          <path d="M5 1l4.500 10h-9z" fill={green} stroke="#b5f5e6" />{line('M5.500 1l4 10.500h-9', '#2f6f60')}
        </svg>
        <TrackGap $share={98} />
        <Thumb />
        <TrackGap $share={80} />
        <svg width="10" height="12" viewBox="0 0 10 12" aria-hidden="true">
          <path d="M0.500 1h9l-4.500 10z" fill={green} stroke="#b5f5e6" />{line('M9.500 1L5.500 11', '#2f6f60')}
        </svg>
      </ScrollTrack>
    </ListArea>
    <Selected>Selected : 1108</Selected>
  </Side>
);

const LogoWord = styled.text`
  font: italic bold 31px "Liberation Sans", Arial, sans-serif;
`;
const LogoArt = styled.svg`
  flex: none;
  overflow: visible;
`;
const Logo = () => (
  <LogoArt width="159" height="48" viewBox="0 0 159 48" role="img" aria-label="Frontline">
    <path d="M3 15l18-2l-1 3H6zM4 21l15-2l-1 3H6zM2 28l15-2l-1 3H5zM-1 35l17-3l-1 4H3zM15 13h7l-6 23h-4z" fill="#e82020" />
    <g fill="#00007c">
      <LogoWord x="19" y="37">Fr</LogoWord>
      <LogoWord x="72" y="37">ntline</LogoWord>
    </g>
    <circle cx="61" cy="27.500" r="9" fill="#c8f4f4" stroke="#00007c" strokeWidth="1.500" />
    <path d="M61 23l4 4.500l-4 4.500l-4-4.500z" fill="#f01010" />
  </LogoArt>
);

export default function App() {
  return (
    <Screen>
      <Global />
      <MainTitle>
        <AppIcon />
        <TitleText>Graphic Editor 9.02c2 (00@HY-HYCAM-PC050 - Windows, pid:376)</TitleText>
        <CaptionButton aria-label="Minimize">
          <svg width="10" height="9" aria-hidden="true"><path d="M1 6h6v2h-6z" /></svg>
        </CaptionButton>
        <CaptionButton aria-label="Restore">
          <svg width="10" height="9" viewBox="0 0 10 9" aria-hidden="true">{line('M3 1h6M3.500 1v2M8.500 1v4.500h-2M1 4h6M1.500 4v4.500h5v-5')}</svg>
        </CaptionButton>
        <CaptionButton aria-label="Close" $gap><CloseGlyph /></CaptionButton>
      </MainTitle>
      <HeaderRow>
        <MenuFrame>
          <MenuPanel>
            {menu.map(([a, b, c]) => (
              <MenuItem key={a + b + c}>{a}{b && <u>{b}</u>}{c}</MenuItem>
            ))}
          </MenuPanel>
        </MenuFrame>
        <Brand>
          <Logo />
          <BrandName>
            <Product>Genesis 2000</Product>
            <Edition>Graphic Editor</Edition>
          </BrandName>
          <Clock>21 Oct 2013<br />09:29 PM</Clock>
        </Brand>
      </HeaderRow>
      <Body>
        <LayerPanel />
        <Viewport><Board /></Viewport>
        <Palette>
          <ToolTiles tools={viewTools} />
          <ToolTiles tools={editTools} />
        </Palette>
      </Body>
      <CommandBar>
        <CommandCell>
          <CommandButton aria-label="Corner to corner">
            <svg width="19" height="19" viewBox="0 0 19 19" aria-hidden="true">
              {line('M0.500 0.500h18v18h-18zM4 4l11 11M4 8v-4h4M11 15h4v-4')}
            </svg>
          </CommandButton>
        </CommandCell>
        <CommandCell>
          <CommandButton aria-label="Angle and distance">
            <svg width="19" height="19" viewBox="0 0 19 19" aria-hidden="true">
              {line('M0.500 0.500h18v18h-18zM2 16L16 3M5 4v7h5M10 12l2 4M12 12l-2 4M13 12h3v3h-3')}
            </svg>
          </CommandButton>
        </CommandCell>
        <CommandCell $green>
          <CommandButton aria-label="Grid">
            <svg width="17" height="17" viewBox="0 0 17 17" aria-hidden="true">
              {line('M0.500 0.500h16v16h-16zM2.500 14.500v-9l3-3h9v12zM8.500 2v13M3 8.500h12')}
            </svg>
          </CommandButton>
        </CommandCell>
        <XYLabel htmlFor="xy">X Y :</XYLabel>
        <XYField><Beam /><input id="xy" /></XYField>
        <CommandCell $green>
          <CommandButton aria-label="Alert">
            <svg width="17" height="17" viewBox="0 0 17 17" aria-hidden="true">
              {line('M0.500 0.500h16v16h-16z')}{line('M8.500 3v7M8.500 12v2', '#000', 2)}
            </svg>
          </CommandButton>
        </CommandCell>
        <Prompt>&lt;M1&gt; - Select first rectangle corner</Prompt>
      </CommandBar>
      <StatusFrame><StatusBar>DX=1.2,DY=0.4</StatusBar></StatusFrame>

      <Popview title="Popview - 2" x={231} y={62} w={292}><PopTwoArt /></Popview>
      <Popview title="Popview - 1" x={922} y={259} w={373}><PopOneArt /></Popview>
      <Popview title="Popview - 3" x={163} y={463} w={375}><PopThreeArt /></Popview>
      <DrillManager />

      <Note>
        <NoteLine><Han>此两孔公差是否</Han></NoteLine>
        <NoteLine><Han>也需</Han></NoteLine>
        <NoteLine><Han>按</Han>+0.08mm,-0.0</NoteLine>
        <NoteLine>0mm<Han>控制</Han>!</NoteLine>
      </Note>
      <Markup aria-hidden="true">
        <g fill="none" stroke="#555" strokeOpacity="0.350" strokeWidth="3">
          <ellipse cx="1073" cy="668" rx="366" ry="23" />
          <path d="M748 162L1030 655" strokeWidth="6" />
        </g>
        <g fill="none" stroke="#c8207c" strokeWidth="2">
          <ellipse cx="346.500" cy="196.500" rx="45" ry="29" />
          <ellipse cx="1120" cy="407" rx="60" ry="47" />
          <ellipse cx="1071" cy="665" rx="366" ry="23" strokeWidth="3" />
        </g>
        <path d="M744 158L1025 650" stroke="#f0f000" strokeWidth="5" strokeLinecap="round" fill="none" />
        <path d="M733 138l22 17l-20 12z" fill="#f0f000" />
      </Markup>
    </Screen>
  );
}
